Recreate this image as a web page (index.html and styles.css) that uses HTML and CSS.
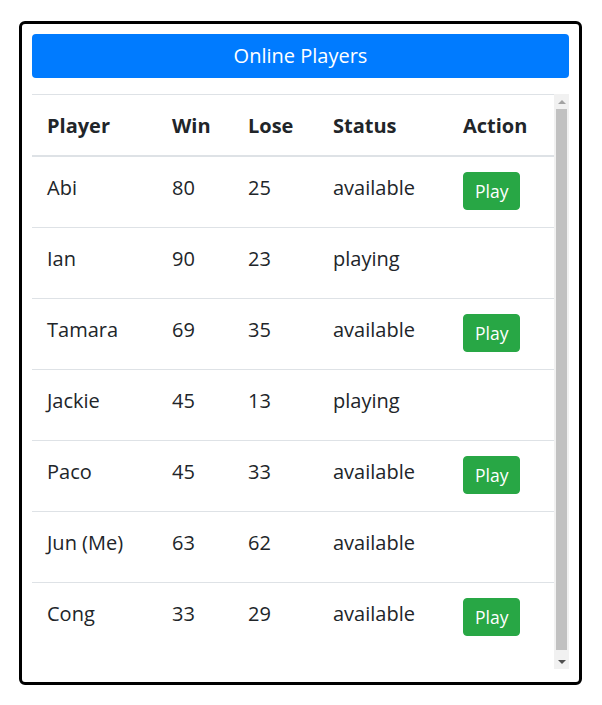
FILE: index.html
```html
<!DOCTYPE html>
<html lang="en">
<head>
<meta charset="utf-8">
<title>Online Players</title>
<link rel="stylesheet" href="styles.css">
</head>
<body>
<div class="panel">
  <div class="panel-header">Online Players</div>
  <div class="scroll">
    <div class="scroll-body">
      <table class="players">
        <thead>
          <tr>
            <th class="c-player">Player</th>
            <th class="c-win">Win</th>
            <th class="c-lose">Lose</th>
            <th class="c-status">Status</th>
            <th class="c-action">Action</th>
          </tr>
        </thead>
        <tbody>
          <tr><td>Abi</td><td>80</td><td>25</td><td>available</td><td><button class="btn-play">Play</button></td></tr>
          <tr><td>Ian</td><td>90</td><td>23</td><td>playing</td><td></td></tr>
          <tr><td>Tamara</td><td>69</td><td>35</td><td>available</td><td><button class="btn-play">Play</button></td></tr>
          <tr><td>Jackie</td><td>45</td><td>13</td><td>playing</td><td></td></tr>
          <tr><td>Paco</td><td>45</td><td>33</td><td>available</td><td><button class="btn-play">Play</button></td></tr>
          <tr><td>Jun (Me)</td><td>63</td><td>62</td><td>available</td><td></td></tr>
          <tr><td>Cong</td><td>33</td><td>29</td><td>available</td><td><button class="btn-play">Play</button></td></tr>
        </tbody>
      </table>
    </div>
    <div class="scrollbar" aria-hidden="true">
      <div class="sb-btn"><span class="arrow-up"></span></div>
      <div class="sb-track"><div class="sb-thumb"></div></div>
      <div class="sb-btn"><span class="arrow-down"></span></div>
    </div>
  </div>
</div>
</body>
</html>
```
FILE: styles.css
```css
html, body {
  margin: 0;
  padding: 0;
  background: #fff;
}
body {
  font-family: "Open Sans", "Liberation Sans", sans-serif;
  font-size: 20px;
  line-height: 30px;
  color: #212529;
}
.panel {
  box-sizing: border-box;
  width: 563px;
  height: 664px;
  margin: 21px 0 0 19px;
  border: 3px solid #000;
  border-radius: 6px;
  padding: 10px 10px 13px 10px;
  display: flex;
  flex-direction: column;
  gap: 16px;
}
.panel-header {
  height: 44px;
  line-height: 44px;
  background: #007bff;
  color: #fff;
  border-radius: 4px;
  text-align: center;
  font-size: 20px;
}
.scroll {
  height: 575px;
  display: flex;
}
.scroll-body {
  flex: 1;
  overflow: hidden;
}
.players {
  width: 100%;
  border-collapse: collapse;
  table-layout: fixed;
}
.players th,
.players td {
  padding: 16px 15px 14px 15px;
  text-align: left;
  vertical-align: top;
  border-top: 1px solid #dee2e6;
}
.players th {
  font-weight: 700;
  border-bottom: 2px solid #dee2e6;
  height: 30px;
}
.players td {
  height: 40px;
}
.c-player { width: 95px; }
.c-win { width: 46px; }
.c-lose { width: 55px; }
.c-status { width: 100px; }
.btn-play {
  font-family: inherit;
  font-size: 17.5px;
  line-height: 26px;
  color: #fff;
  background: #28a745;
  border: 1px solid #28a745;
  border-radius: 4px;
  padding: 5px 11px;
  margin-top: -1px;
  cursor: pointer;
}
.scrollbar {
  width: 15px;
  background: #f1f1f1;
  display: flex;
  flex-direction: column;
}
.sb-btn {
  height: 15px;
  display: flex;
  align-items: center;
  justify-content: center;
}
.arrow-up {
  width: 0;
  height: 0;
  border-left: 4px solid transparent;
  border-right: 4px solid transparent;
  border-bottom: 4px solid #a3a3a3;
}
.arrow-down {
  width: 0;
  height: 0;
  border-left: 4px solid transparent;
  border-right: 4px solid transparent;
  border-top: 4px solid #505050;
}
.sb-track {
  flex: 1;
  padding: 0 2px 4px 2px;
  display: flex;
}
.sb-thumb {
  flex: 1;
  background: #c1c1c1;
}
```
